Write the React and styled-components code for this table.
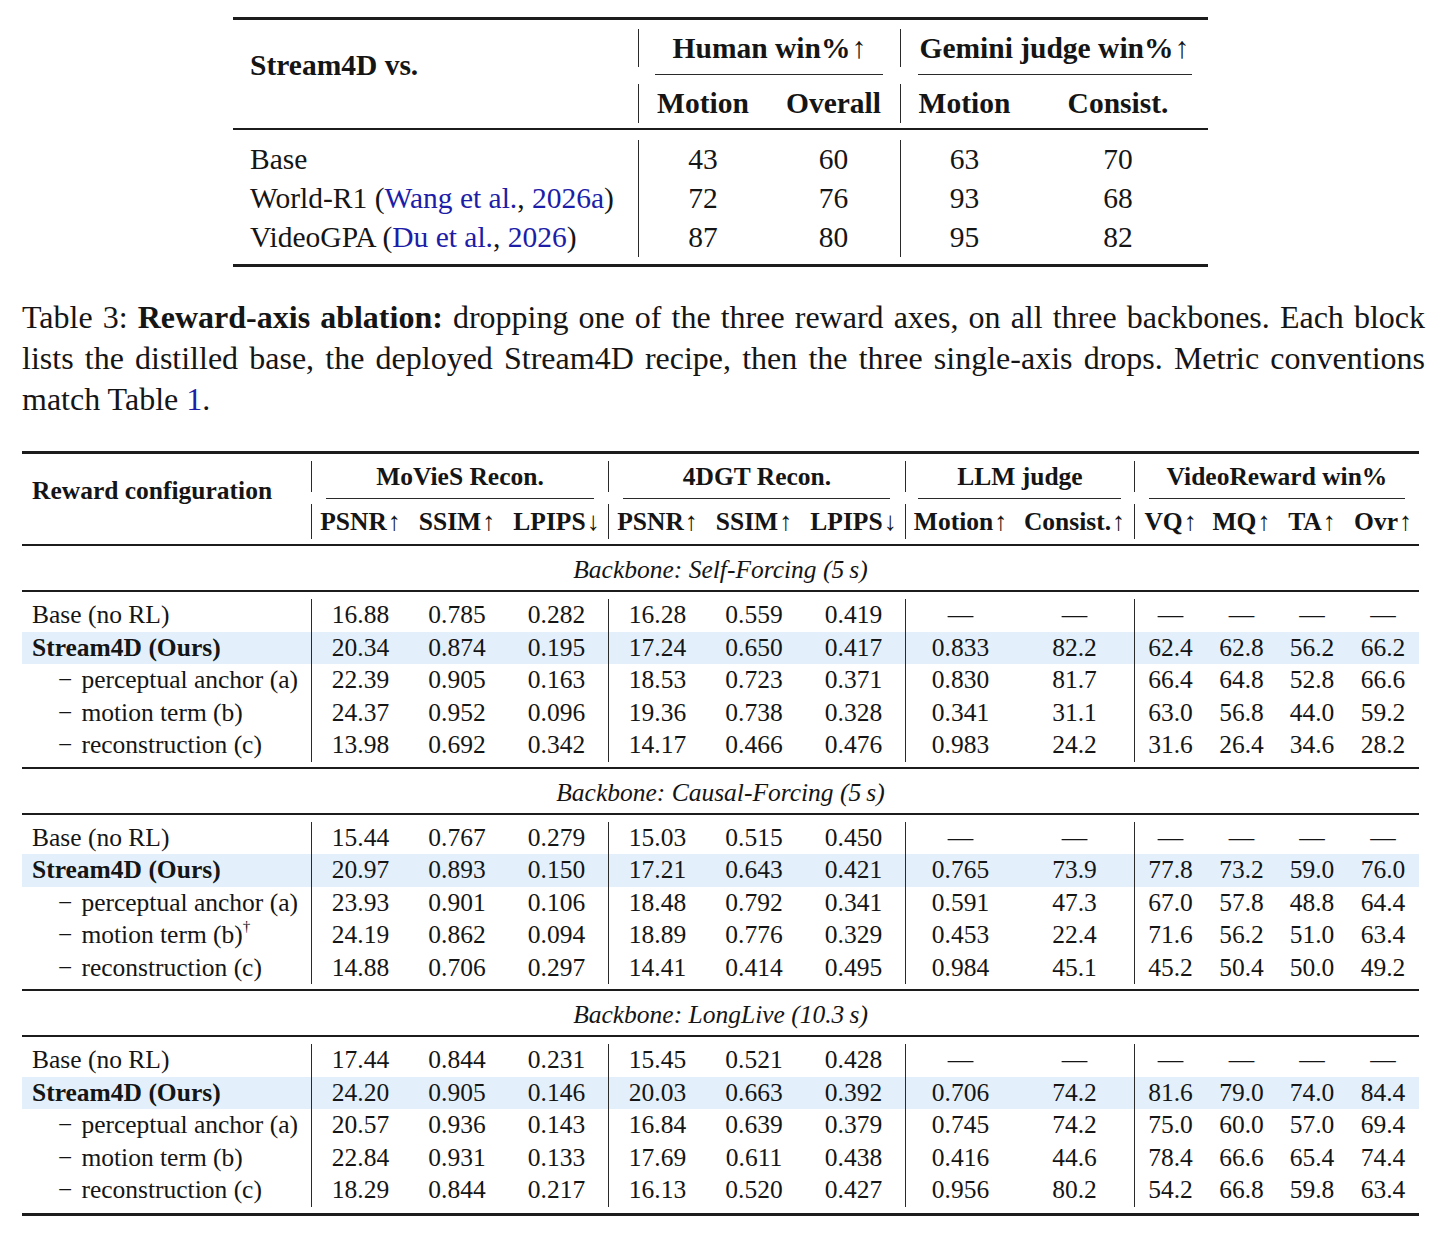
import React from "react";
import styled, { createGlobalStyle } from "styled-components";

const GlobalStyle = createGlobalStyle`
  html, body { margin: 0; padding: 0; background: #ffffff; }
  body {
    font-family: "Liberation Serif", "Times New Roman", Times, serif;
    color: #151515;
  }
`;

const Page = styled.main`
  width: 1403px;
  padding: 17px 16px 20px 22px;
  display: flex;
  flex-direction: column;
`;

const Rule = styled.div`
  height: ${(p) => p.$weight}px;
  background: #1c1c1c;
  margin-top: ${(p) => p.$above || 0}px;
`;

const Arrow = styled.span`
  font-weight: 400;
  font-size: 1.02em;
  margin-left: 1px;
`;

const Cite = styled.span`
  color: #1d1da8;
`;

/* ---------- Table 1 ---------- */

const T1COLS = "405px 129px 133px 128px 180px";

const Table1Frame = styled.section`
  width: 975px;
  margin-left: 211px;
  font-size: 29.5px;
`;

const T1Head = styled.div`
  display: grid;
  grid-template-columns: ${T1COLS};
  grid-template-rows: 38px 17px 39px;
  margin-top: 9px;
`;

const T1Corner = styled.div`
  grid-column: 1;
  grid-row: 1 / 4;
  padding: 17px 0 0 17px;
  line-height: 39px;
  font-weight: 700;
`;

const T1Group = styled.div`
  grid-row: 1;
  grid-column: ${(p) => p.$cols};
  border-left: 1px solid #2a2a2a;
  display: flex;
  align-items: center;
  justify-content: center;
  font-weight: 700;
  white-space: nowrap;
`;

const T1Cmid = styled.div`
  grid-row: 2;
  grid-column: ${(p) => p.$cols};
  margin: 7px ${(p) => p.$right}px 0 ${(p) => p.$left}px;
  height: 1.4px;
  background: #2a2a2a;
`;

const T1Metric = styled.div`
  grid-row: 3;
  grid-column: ${(p) => p.$col};
  display: flex;
  align-items: center;
  justify-content: center;
  font-weight: 700;
  border-left: ${(p) => (p.$divider ? "1px solid #2a2a2a" : "none")};
`;

const T1Body = styled.div`
  margin-top: 10px;
  display: flex;
  flex-direction: column;
`;

const T1Row = styled.div`
  display: grid;
  grid-template-columns: ${T1COLS};
  height: 39px;
  line-height: 39px;
`;

const T1Label = styled.div`
  padding-left: 17px;
  white-space: nowrap;
`;

const T1Value = styled.div`
  text-align: center;
  border-left: ${(p) => (p.$divider ? "1px solid #2a2a2a" : "none")};
`;

const t1Rows = [
  { label: <>Base</>, v: ["43", "60", "63", "70"] },
  {
    label: (
      <>
        World-R1 (<Cite>Wang et al.</Cite>, <Cite>2026a</Cite>)
      </>
    ),
    v: ["72", "76", "93", "68"],
  },
  {
    label: (
      <>
        VideoGPA (<Cite>Du et al.</Cite>, <Cite>2026</Cite>)
      </>
    ),
    v: ["87", "80", "95", "82"],
  },
];

function Table1() {
  return (
    <Table1Frame>
      <Rule $weight={3} />
      <T1Head>
        <T1Corner>Stream4D vs.</T1Corner>
        <T1Group $cols="2 / 4">
          Human win%<Arrow>↑</Arrow>
        </T1Group>
        <T1Group $cols="4 / 6">
          Gemini judge win%<Arrow>↑</Arrow>
        </T1Group>
        <T1Cmid $cols="2 / 4" $left={17} $right={17} />
        <T1Cmid $cols="4 / 6" $left={18} $right={16} />
        <T1Metric $divider $col={2}>Motion</T1Metric>
        <T1Metric $col={3}>Overall</T1Metric>
        <T1Metric $divider $col={4}>Motion</T1Metric>
        <T1Metric $col={5}>Consist.</T1Metric>
      </T1Head>
      <Rule $weight={2} $above={5} />
      <T1Body>
        {t1Rows.map((r, i) => (
          <T1Row key={i}>
            <T1Label>{r.label}</T1Label>
            {r.v.map((x, j) => (
              <T1Value key={j} $divider={j === 0 || j === 2}>
                {x}
              </T1Value>
            ))}
          </T1Row>
        ))}
      </T1Body>
      <Rule $weight={3} $above={7} />
    </Table1Frame>
  );
}

/* ---------- Caption ---------- */

const Caption = styled.p`
  margin: 30px 0 0 0;
  width: 1403px;
  font-size: 32px;
  line-height: 41px;
  text-align: justify;
`;

const RefLink = styled.span`
  color: #1d1da8;
`;

/* ---------- Table 2 ---------- */

const T2COLS =
  "289px 98px 96px 103px 98px 96px 103px 110px 119px 72px 71px 70px 72px";

const Table2Frame = styled.section`
  width: 1397px;
  margin-top: 31px;
  font-size: 25.5px;
`;

const T2Head = styled.div`
  display: grid;
  grid-template-columns: ${T2COLS};
  grid-template-rows: 31px 12px 35px;
  margin-top: 7px;
`;

const T2Corner = styled.div`
  grid-column: 1;
  grid-row: 1 / 4;
  padding: 14px 0 0 10px;
  line-height: 32px;
  font-weight: 700;
  white-space: nowrap;
`;

const T2Group = styled.div`
  grid-row: 1;
  grid-column: ${(p) => p.$cols};
  border-left: 1px solid #2a2a2a;
  display: flex;
  align-items: center;
  justify-content: center;
  font-weight: 700;
  white-space: nowrap;
`;

const T2Cmid = styled.div`
  grid-row: 2;
  grid-column: ${(p) => p.$cols};
  margin: 5.5px ${(p) => p.$right}px 0 ${(p) => p.$left}px;
  height: 1.3px;
  background: #2a2a2a;
`;

const T2Metric = styled.div`
  grid-row: 3;
  grid-column: ${(p) => p.$col};
  display: flex;
  align-items: center;
  justify-content: center;
  font-weight: 700;
  white-space: nowrap;
  border-left: ${(p) => (p.$divider ? "1px solid #2a2a2a" : "none")};
`;

const Backbone = styled.div`
  padding: 7px 0 4px;
  line-height: 33px;
  text-align: center;
  font-style: italic;
`;

const T2Body = styled.div`
  margin-top: 7px;
  display: flex;
  flex-direction: column;
`;

const T2Row = styled.div`
  display: grid;
  grid-template-columns: ${T2COLS};
  height: 32.5px;
  line-height: 32.5px;
  background: ${(p) => (p.$highlight ? "#e3f0fc" : "transparent")};
`;

const T2Label = styled.div`
  padding-left: ${(p) => (p.$indent ? 36 : 10)}px;
  font-weight: ${(p) => (p.$bold ? 700 : 400)};
  white-space: nowrap;
`;

const Minus = styled.span`
  margin-right: 9px;
`;

const Dagger = styled.sup`
  font-size: 0.6em;
  line-height: 0;
  vertical-align: 0.8em;
`;

const T2Value = styled.div`
  text-align: center;
  white-space: nowrap;
  border-left: ${(p) => (p.$divider ? "1px solid #2a2a2a" : "none")};
`;

const groups = [
  { name: "MoVieS Recon.", cols: "2 / 5", l: 15, r: 14 },
  { name: "4DGT Recon.", cols: "5 / 8", l: 15, r: 15 },
  { name: "LLM judge", cols: "8 / 10", l: 13, r: 13 },
  { name: "VideoReward win%", cols: "10 / 14", l: 15, r: 14 },
];

const metrics = [
  ["PSNR", "↑"],
  ["SSIM", "↑"],
  ["LPIPS", "↓"],
  ["PSNR", "↑"],
  ["SSIM", "↑"],
  ["LPIPS", "↓"],
  ["Motion", "↑"],
  ["Consist.", "↑"],
  ["VQ", "↑"],
  ["MQ", "↑"],
  ["TA", "↑"],
  ["Ovr", "↑"],
];

const DIVIDERS = [0, 3, 6, 8];
const D = "—";
const none6 = [D, D, D, D, D, D];

const sections = [
  {
    title: "Backbone: Self-Forcing (5\u2009s)",
    rows: [
      { kind: "base", label: "Base (no RL)", v: ["16.88", "0.785", "0.282", "16.28", "0.559", "0.419", ...none6] },
      { kind: "ours", label: "Stream4D (Ours)", v: ["20.34", "0.874", "0.195", "17.24", "0.650", "0.417", "0.833", "82.2", "62.4", "62.8", "56.2", "66.2"] },
      { kind: "drop", label: "perceptual anchor (a)", v: ["22.39", "0.905", "0.163", "18.53", "0.723", "0.371", "0.830", "81.7", "66.4", "64.8", "52.8", "66.6"] },
      { kind: "drop", label: "motion term (b)", v: ["24.37", "0.952", "0.096", "19.36", "0.738", "0.328", "0.341", "31.1", "63.0", "56.8", "44.0", "59.2"] },
      { kind: "drop", label: "reconstruction (c)", v: ["13.98", "0.692", "0.342", "14.17", "0.466", "0.476", "0.983", "24.2", "31.6", "26.4", "34.6", "28.2"] },
    ],
  },
  {
    title: "Backbone: Causal-Forcing (5\u2009s)",
    rows: [
      { kind: "base", label: "Base (no RL)", v: ["15.44", "0.767", "0.279", "15.03", "0.515", "0.450", ...none6] },
      { kind: "ours", label: "Stream4D (Ours)", v: ["20.97", "0.893", "0.150", "17.21", "0.643", "0.421", "0.765", "73.9", "77.8", "73.2", "59.0", "76.0"] },
      { kind: "drop", label: "perceptual anchor (a)", v: ["23.93", "0.901", "0.106", "18.48", "0.792", "0.341", "0.591", "47.3", "67.0", "57.8", "48.8", "64.4"] },
      { kind: "drop", label: "motion term (b)", dagger: true, v: ["24.19", "0.862", "0.094", "18.89", "0.776", "0.329", "0.453", "22.4", "71.6", "56.2", "51.0", "63.4"] },
      { kind: "drop", label: "reconstruction (c)", v: ["14.88", "0.706", "0.297", "14.41", "0.414", "0.495", "0.984", "45.1", "45.2", "50.4", "50.0", "49.2"] },
    ],
  },
  {
    title: "Backbone: LongLive (10.3\u2009s)",
    rows: [
      { kind: "base", label: "Base (no RL)", v: ["17.44", "0.844", "0.231", "15.45", "0.521", "0.428", ...none6] },
      { kind: "ours", label: "Stream4D (Ours)", v: ["24.20", "0.905", "0.146", "20.03", "0.663", "0.392", "0.706", "74.2", "81.6", "79.0", "74.0", "84.4"] },
      { kind: "drop", label: "perceptual anchor (a)", v: ["20.57", "0.936", "0.143", "16.84", "0.639", "0.379", "0.745", "74.2", "75.0", "60.0", "57.0", "69.4"] },
      { kind: "drop", label: "motion term (b)", v: ["22.84", "0.931", "0.133", "17.69", "0.611", "0.438", "0.416", "44.6", "78.4", "66.6", "65.4", "74.4"] },
      { kind: "drop", label: "reconstruction (c)", v: ["18.29", "0.844", "0.217", "16.13", "0.520", "0.427", "0.956", "80.2", "54.2", "66.8", "59.8", "63.4"] },
    ],
  },
];

function DataRow({ row }) {
  const drop = row.kind === "drop";
  return (
    <T2Row $highlight={row.kind === "ours"}>
      <T2Label $indent={drop} $bold={row.kind === "ours"}>
        {drop && <Minus>−</Minus>}
        {row.label}
        {row.dagger && <Dagger>†</Dagger>}
      </T2Label>
      {row.v.map((x, j) => (
        <T2Value key={j} $divider={DIVIDERS.includes(j)}>
          {x}
        </T2Value>
      ))}
    </T2Row>
  );
}

function Table2() {
  return (
    <Table2Frame>
      <Rule $weight={3} />
      <T2Head>
        <T2Corner>Reward configuration</T2Corner>
        {groups.map((g) => (
          <T2Group key={g.name} $cols={g.cols}>
            {g.name}
          </T2Group>
        ))}
        {groups.map((g) => (
          <T2Cmid key={g.name} $cols={g.cols} $left={g.l} $right={g.r} />
        ))}
        {metrics.map(([m, a], i) => (
          <T2Metric key={i} $col={i + 2} $divider={DIVIDERS.includes(i)}>
            {m}
            <Arrow>{a}</Arrow>
          </T2Metric>
        ))}
      </T2Head>
      {sections.map((s) => (
        <React.Fragment key={s.title}>
          <Rule $weight={2} $above={5} />
          <Backbone>{s.title}</Backbone>
          <Rule $weight={2} />
          <T2Body>
            {s.rows.map((r, ri) => (
              <DataRow key={ri} row={r} />
            ))}
          </T2Body>
        </React.Fragment>
      ))}
      <Rule $weight={3} $above={6} />
    </Table2Frame>
  );
}

export default function App() {
  return (
    <>
      <GlobalStyle />
      <Page>
        <Table1 />
        <Caption>
          Table 3: <strong>Reward-axis ablation:</strong> dropping one of the
          three reward axes, on all three backbones. Each block lists the
          distilled base, the deployed Stream4D recipe, then the three
          single-axis drops. Metric conventions match Table <RefLink>1</RefLink>.
        </Caption>
        <Table2 />
      </Page>
    </>
  );
}
